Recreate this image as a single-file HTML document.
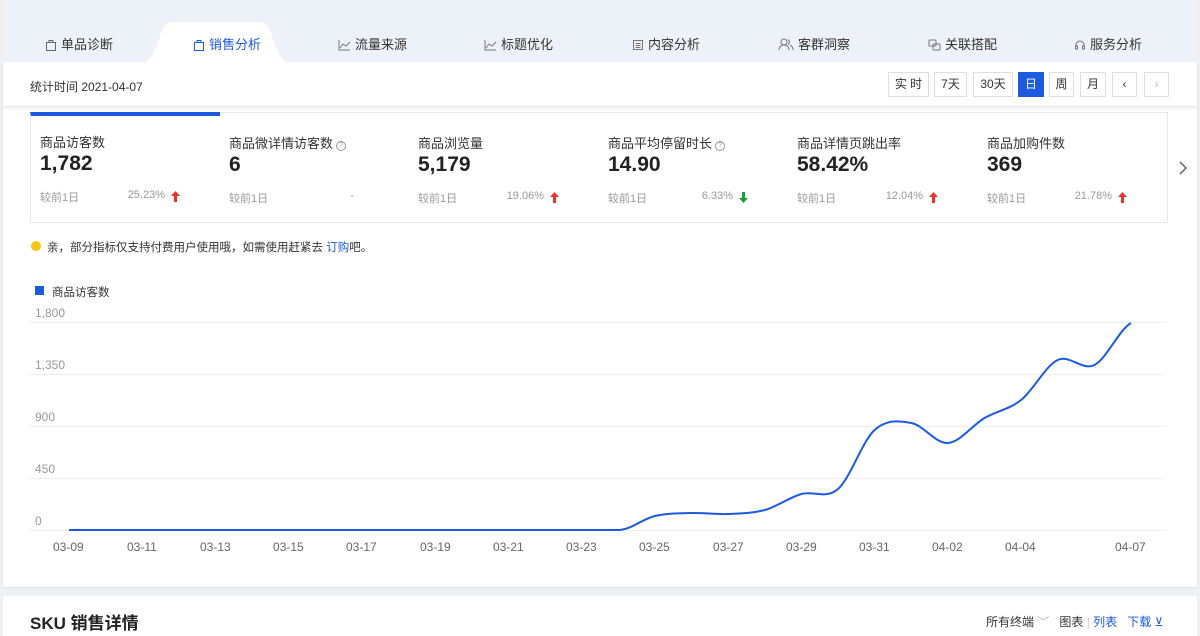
<!DOCTYPE html>
<html><head><meta charset="utf-8"><style>
*{margin:0;padding:0;box-sizing:border-box}
body{width:1200px;height:627px;overflow:hidden;background:#eef0f3;font-family:"Liberation Sans","Noto Sans CJK SC",sans-serif;position:relative;color:#333}
.abs{position:absolute}
.tabs{left:3px;top:0;width:1194px;height:62px;background:#edf1f8}
.tab{position:absolute;top:34px;font-size:13px;color:#333;white-space:nowrap}
.tab svg{vertical-align:-2px;margin-right:4px}
.card{left:3px;top:62px;width:1194px;height:525px;background:#fff;box-shadow:0 1px 3px rgba(0,0,0,.06)}
.bar{left:3px;top:62px;width:1194px;height:45px;background:#fff;border-bottom:1px solid #e3e5e9;box-shadow:0 2px 3px rgba(0,0,0,.05)}
.btn{position:absolute;top:72px;height:25px;border:1px solid #dcdfe4;background:#fff;font-size:12px;line-height:23px;text-align:center;color:#333}
.m{position:absolute;top:112px;height:111px;border:1px solid #e6e8eb;border-left:none;background:#fff}
.m .t{position:absolute;left:9px;top:20px;font-size:13px;color:#333}
.m .v{position:absolute;left:9px;top:40px;font-size:21px;font-weight:bold;color:#222}
.m .c{position:absolute;left:9px;top:77px;font-size:11px;color:#999}
.m .p{position:absolute;right:55px;top:77px;font-size:11px;color:#999}
.m svg.ar{position:absolute;right:40px;top:79px}
.q{display:inline-block;width:10px;height:10px;border:1px solid #999;border-radius:50%;font-size:7px;line-height:8px;text-align:center;color:#999;vertical-align:1px;margin-left:3px}
.yl{position:absolute;left:35px;font-size:12px;color:#999}
.xl{position:absolute;top:540px;font-size:12px;color:#666}
</style></head><body>
<div class="abs tabs"></div>
<svg class="abs" style="left:138px;top:22px" width="156" height="41"><path d="M0,41 C10,41 14,36 18,26 L24,8 C27,2 30,0 38,0 L118,0 C126,0 129,2 132,8 L138,26 C142,36 146,41 156,41Z" fill="#fff"/></svg>
<div class="tab" style="left:45px"><svg width="12" height="12" viewBox="0 0 12 12" fill="none" stroke="#666"><rect x="1.5" y="3.5" width="9" height="8"/><path d="M4 3.5V1.5h4v2"/></svg>单品诊断</div>
<div class="tab" style="left:193px;color:#1c5ae0"><svg width="12" height="12" viewBox="0 0 12 12" fill="none" stroke="#1c5ae0"><rect x="1.5" y="3.5" width="9" height="8"/><path d="M4 3.5V1.5h4v2"/></svg>销售分析</div>
<div class="tab" style="left:338px"><svg width="13" height="12" viewBox="0 0 13 12" fill="none" stroke="#777"><path d="M1 1v10h11M2 9l3-4 3 2 4-4"/></svg>流量来源</div>
<div class="tab" style="left:484px"><svg width="13" height="12" viewBox="0 0 13 12" fill="none" stroke="#777"><path d="M1 1v10h11M2 9l3-4 3 2 4-4"/></svg>标题优化</div>
<div class="tab" style="left:632px"><svg width="12" height="12" viewBox="0 0 12 12" fill="none" stroke="#777"><rect x="1.5" y="1.5" width="9" height="9"/><path d="M3.5 4.5h5M3.5 6.5h5M3.5 8.5h5"/></svg>内容分析</div>
<div class="tab" style="left:778px"><svg width="16" height="13" viewBox="0 0 16 13" fill="none" stroke="#777"><circle cx="6" cy="4" r="3"/><path d="M1 12c0-3 2-5 5-5s5 2 5 5M10 1.5a3 3 0 010 5M12 7c2 1 3 3 3 5"/></svg>客群洞察</div>
<div class="tab" style="left:928px"><svg width="13" height="12" viewBox="0 0 13 12" fill="none" stroke="#777"><rect x="1" y="1" width="7" height="6" rx="1"/><rect x="5" y="5" width="7" height="6" rx="1"/></svg>关联搭配</div>
<div class="tab" style="left:1074px"><svg width="12" height="12" viewBox="0 0 12 12" fill="none" stroke="#777"><path d="M2 8V6a4 4 0 018 0v2"/><rect x="1.5" y="7" width="2" height="3"/><rect x="8.5" y="7" width="2" height="3"/></svg>服务分析</div>
<div class="abs card"></div>
<div class="abs bar"></div>
<div class="abs" style="left:30px;top:78px;font-size:12px;color:#333">统计时间 2021-04-07</div>
<div class="btn" style="left:888px;width:41px">实 时</div>
<div class="btn" style="left:934px;width:33px">7天</div>
<div class="btn" style="left:973px;width:40px">30天</div>
<div class="btn" style="left:1018px;width:26px;background:#1c5ae0;border-color:#1c5ae0;color:#fff">日</div>
<div class="btn" style="left:1049px;width:25px">周</div>
<div class="btn" style="left:1080px;width:26px">月</div>
<div class="btn" style="left:1112px;width:25px">‹</div>
<div class="btn" style="left:1144px;width:25px;color:#bbb">›</div>

<div class="m" style="left:30px;width:191px;border-left:1px solid #e6e8eb;border-top:4px solid #1c5ae0"><div class="t" style="top:16px">商品访客数</div><div class="v" style="top:36px">1,782</div><div class="c" style="top:73px">较前1日</div><div class="p" style="top:73px">25.23%</div><svg class="ar" style="top:75px" width="9" height="11"><path d="M4.5 0L9 5H6v6H3V5H0z" fill="#e8332a"/></svg></div>
<div class="m" style="left:220px;width:190px"><div class="t">商品微详情访客数<span class="q">?</span></div><div class="v">6</div><div class="c">较前1日</div><div class="p" style="right:55px">-</div></div>
<div class="m" style="left:409px;width:191px"><div class="t">商品浏览量</div><div class="v">5,179</div><div class="c">较前1日</div><div class="p">19.06%</div><svg class="ar" width="9" height="11"><path d="M4.5 0L9 5H6v6H3V5H0z" fill="#e8332a"/></svg></div>
<div class="m" style="left:599px;width:190px"><div class="t">商品平均停留时长<span class="q">?</span></div><div class="v">14.90</div><div class="c">较前1日</div><div class="p">6.33%</div><svg class="ar" width="9" height="11"><path d="M4.5 11L9 6H6V0H3v6H0z" fill="#1a9c3c"/></svg></div>
<div class="m" style="left:788px;width:191px"><div class="t">商品详情页跳出率</div><div class="v">58.42%</div><div class="c">较前1日</div><div class="p">12.04%</div><svg class="ar" width="9" height="11"><path d="M4.5 0L9 5H6v6H3V5H0z" fill="#e8332a"/></svg></div>
<div class="m" style="left:978px;width:190px"><div class="t">商品加购件数</div><div class="v">369</div><div class="c">较前1日</div><div class="p">21.78%</div><svg class="ar" width="9" height="11"><path d="M4.5 0L9 5H6v6H3V5H0z" fill="#e8332a"/></svg></div>
<svg class="abs" style="left:1178px;top:160px" width="10" height="16"><path d="M2 2l6 6-6 6" fill="none" stroke="#555" stroke-width="1.3"/></svg>

<div class="abs" style="left:31px;top:241px;width:10px;height:10px;border-radius:50%;background:#f5c518"></div>
<div class="abs" style="left:47px;top:239px;font-size:11.5px;color:#333">亲，部分指标仅支持付费用户使用哦，如需使用赶紧去 <span style="color:#1c5ae0">订购</span>吧。</div>
<div class="abs" style="left:35px;top:286px;width:9px;height:9px;background:#1c5ae0"></div>
<div class="abs" style="left:52px;top:284px;font-size:11.5px;color:#333">商品访客数</div>

<svg class="abs" style="left:0;top:0" width="1200" height="627">
<g stroke="#eceef1" stroke-width="1"><path d="M30 322.5H1165M30 374.5H1165M30 426.5H1165M30 478.5H1165M30 530.5H1165"/></g>
<path d="M69,530 L618.3,530 C630.5,530 642.7,518.8 654.9,516 C667.1,513.2 679.3,513.3 691.5,513 C703.7,512.7 716,514.5 728.2,514 C740.4,513.5 752.6,513.3 764.8,510 C777,506.7 789.2,497.5 801.4,494 C813.6,490.5 825.8,499.7 838,489 C850.2,478.3 862.4,441 874.6,430 C886.8,419 899.1,420.8 911.3,423 C923.5,425.2 935.7,443.8 947.9,443 C960.1,442.2 972.3,425.2 984.5,418 C996.7,410.8 1008.9,409.7 1021.1,400 C1033.3,390.3 1045.5,365.8 1057.7,360 C1069.9,354.2 1082.2,371.2 1094.4,365 C1106.6,358.8 1118.8,330 1131,323" fill="none" stroke="#1c5ae0" stroke-width="2"/>
</svg>
<div class="yl" style="top:306px">1,800</div>
<div class="yl" style="top:358px">1,350</div>
<div class="yl" style="top:410px">900</div>
<div class="yl" style="top:462px">450</div>
<div class="yl" style="top:514px">0</div>
<div class="xl" style="left:53px">03-09</div><div class="xl" style="left:127px">03-11</div><div class="xl" style="left:200px">03-13</div><div class="xl" style="left:273px">03-15</div><div class="xl" style="left:346px">03-17</div><div class="xl" style="left:420px">03-19</div><div class="xl" style="left:493px">03-21</div><div class="xl" style="left:566px">03-23</div><div class="xl" style="left:639px">03-25</div><div class="xl" style="left:713px">03-27</div><div class="xl" style="left:786px">03-29</div><div class="xl" style="left:859px">03-31</div><div class="xl" style="left:932px">04-02</div><div class="xl" style="left:1005px">04-04</div><div class="xl" style="left:1115px">04-07</div>

<div class="abs" style="left:3px;top:596px;width:1194px;height:40px;background:#fff"></div>
<div class="abs" style="left:30px;top:609px;font-size:17px;font-weight:bold;color:#222">SKU 销售详情</div>
<div class="abs" style="left:986px;top:613px;font-size:12px;color:#333">所有终端 <span style="color:#bbb">﹀</span>&nbsp;&nbsp; 图表 <span style="color:#ccc">|</span> <span style="color:#1c5ae0">列表</span>&nbsp;&nbsp; <span style="color:#1c5ae0">下载 ⊻</span></div>
</body></html>
